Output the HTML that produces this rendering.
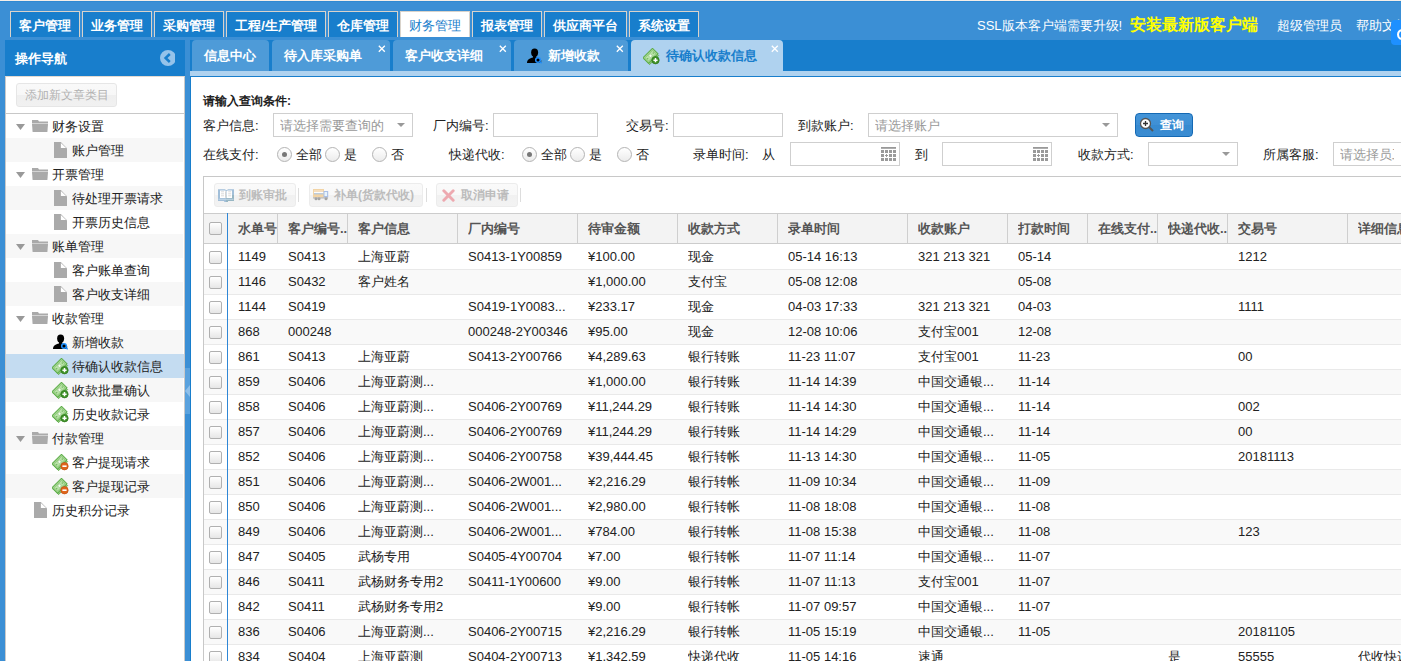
<!DOCTYPE html><html><head><meta charset="utf-8"><style>
*{box-sizing:border-box;margin:0;padding:0}
html,body{width:1401px;height:661px;overflow:hidden}
body{position:relative;background:#3b8fd5;font-family:"Liberation Sans",sans-serif;font-size:13px;color:#222}
.a{position:absolute}
.topline{left:0;top:0;width:1401px;height:1px;background:#f4eee8;box-shadow:0 1px 0 #2f89d2}
.mt{position:absolute;top:11px;height:26px;background:#187ecc;border:1px solid #d9d3cb;border-bottom:none;color:#fff;font-weight:bold;font-size:13px;line-height:24px;padding-top:2px;text-align:center;white-space:nowrap}
.mt.on{background:#fff;color:#187ecc;font-weight:normal}
.hdr{color:#fff;font-size:13px;line-height:20px;top:16px;white-space:nowrap}
.lpanel-h{left:5px;top:40px;width:180px;height:36px;background:#187ecc;color:#fff;font-weight:bold;font-size:13px;line-height:36px;padding-left:10px;padding-top:1px}
.lpanel-b{left:5px;top:76px;width:180px;height:600px;background:#fff;border:1px solid #c9c9c9;border-top:1px solid #e2dad2}
.addbtn{left:16px;top:83px;width:101px;height:24px;border:1px solid #e6e6e6;border-radius:3px;background:linear-gradient(#f9f9f9 0%,#f7f7f7 50%,#efefef 52%,#f1f1f1 100%);color:#b2b2b2;font-size:12px;line-height:22px;text-align:center}
.sep{left:6px;top:113px;width:178px;height:1px;background:#c8c8c8}
.tr{position:absolute;left:6px;width:177px;height:24px;line-height:24px;font-size:13px;color:#222}
.tr.g{background:#f7f7f7}
.tr.sel{background:#c4dcf1;width:178px}
.tr span.t{position:absolute;top:1px}
.mainbar{left:190px;top:40px;width:1211px;height:36px;background:#187ecc}
.strip{left:190px;top:71px;width:1211px;height:5px;background:#afd2ef}
.content{left:190px;top:76px;width:1211px;height:585px;background:#fff;border-left:1px solid #187ecc;border-top:1px solid #187ecc}
.it{position:absolute;top:40px;height:31px;background:#4e9bd8;border-radius:4px 4px 0 0;color:#fff;font-weight:bold;font-size:13px;line-height:30px}
.it.on{background:#afd2ef;color:#187ecc}
.it .x{position:absolute;font-weight:normal;font-size:12px;line-height:12px;color:#fff}
.lbl{position:absolute;font-size:13px;line-height:16px;color:#222;margin-top:1px;white-space:nowrap}
.inp{position:absolute;border:1px solid #cfcfcf;background:#fff;height:24px}
.ph{position:absolute;color:#999;font-size:13px;line-height:16px;white-space:nowrap;overflow:hidden;margin-top:1px}
.tri{position:absolute;width:0;height:0;border-left:4px solid transparent;border-right:4px solid transparent;border-top:4px solid #999}
.radio{position:absolute;width:15px;height:15px;border-radius:50%;border:1px solid #b4b4b4;background:linear-gradient(#fff,#ececec)}
.radio.on::after{content:"";position:absolute;left:4px;top:4px;width:5px;height:5px;border-radius:50%;background:#777}
.grid{left:203px;top:176px;width:1300px;height:600px;border:1px solid #c8c8c8}
.tb{position:absolute;top:183px;height:24px;border:1px solid #ececec;border-radius:3px;background:linear-gradient(#fafafa 0%,#f8f8f8 50%,#f1f1f1 52%,#f3f3f3 100%);color:#bcbcbc;font-weight:bold;font-size:12px;line-height:22px}
.tbsep{position:absolute;top:188px;width:1px;height:14px;background:#ddd}
.gh{left:204px;top:213px;width:1300px;height:31px;background:#f3f3f3;border-top:1px solid #cccccc;border-bottom:1px solid #cccccc}
.hc{position:absolute;top:214px;height:29px;line-height:29px;font-weight:bold;color:#555;font-size:13px;white-space:nowrap;overflow:hidden}
.vs{position:absolute;top:214px;width:1px;height:29px;background:#cfcfcf}
.row{position:absolute;left:204px;width:1300px;height:25px;border-bottom:1px solid #e9e9e9}
.row.g{background:#f9f9f9}
.c{position:absolute;top:0;line-height:24px;white-space:nowrap;overflow:hidden;color:#222}
.cb{position:absolute;width:13px;height:13px;border:1px solid #b0b0b0;border-radius:2px;background:linear-gradient(#fff,#e6e6e6)}
.frz{left:227px;top:213px;width:1px;height:450px;background:#2f87d6}
</style></head><body>
<div class="a topline"></div>
<div class="mt" style="left:10px;width:70px">客户管理</div>
<div class="mt" style="left:82px;width:70px">业务管理</div>
<div class="mt" style="left:154px;width:70px">采购管理</div>
<div class="mt" style="left:226px;width:100px">工程/生产管理</div>
<div class="mt" style="left:328px;width:70px">仓库管理</div>
<div class="mt on" style="left:400px;width:70px">财务管理</div>
<div class="mt" style="left:472px;width:70px">报表管理</div>
<div class="mt" style="left:544px;width:83px">供应商平台</div>
<div class="mt" style="left:629px;width:70px">系统设置</div>
<div class="a hdr" style="left:977px">SSL版本客户端需要升级!</div>
<div class="a hdr" style="left:1130px;top:13px;font-size:16px;line-height:24px;font-weight:bold;color:#ffff00">安装最新版客户端</div>
<div class="a hdr" style="left:1277px">超级管理员</div>
<div class="a hdr" style="left:1356px">帮助文档</div>
<div class="a" style="left:1391px;top:20px;width:20px;height:25px;background:#1e90ff;border-radius:4px;z-index:5"><div class="a" style="left:6px;top:9px;width:11px;height:11px;border:2.5px solid #fff;border-radius:50%"></div></div>
<div class="a lpanel-h">操作导航</div>
<div class="a" style="left:160px;top:50px;width:15px;height:16px;overflow:hidden"><div class="a" style="left:0;top:0;width:16px;height:16px;border-radius:50%;background:#95c3ea"></div></div>
<svg class="a" style="left:160px;top:50px" width="16" height="16"><path d="M9.8 4 L5.6 8 L9.8 12" stroke="#187ecc" stroke-width="2.5" fill="none"/></svg>
<div class="a lpanel-b"></div>
<div class="a addbtn">添加新文章类目</div>
<div class="a sep"></div>
<div class="tr" style="top:114px"><svg class="a" style="left:10px;top:10px" width="9" height="6"><path d="M0 0h9L4.5 6z" fill="#999"/></svg><svg class="a" style="left:26px;top:6px" width="16" height="12"><path d="M0 0h6l1 1.5h9v2H0z" fill="#aaa"/><path d="M0 4h16l-0.6 8H0.6z" fill="#aaa"/></svg><span class="t" style="left:46px">财务设置</span></div>
<div class="tr g" style="top:138px"><svg class="a" style="left:48px;top:4px" width="13" height="16"><path d="M0 0h6.8L13 6.2V16H0z" fill="#aaa"/><path d="M6.9 0.9V6.1h5.2z" fill="#fff"/></svg><span class="t" style="left:66px">账户管理</span></div>
<div class="tr" style="top:162px"><svg class="a" style="left:10px;top:10px" width="9" height="6"><path d="M0 0h9L4.5 6z" fill="#999"/></svg><svg class="a" style="left:26px;top:6px" width="16" height="12"><path d="M0 0h6l1 1.5h9v2H0z" fill="#aaa"/><path d="M0 4h16l-0.6 8H0.6z" fill="#aaa"/></svg><span class="t" style="left:46px">开票管理</span></div>
<div class="tr g" style="top:186px"><svg class="a" style="left:48px;top:4px" width="13" height="16"><path d="M0 0h6.8L13 6.2V16H0z" fill="#aaa"/><path d="M6.9 0.9V6.1h5.2z" fill="#fff"/></svg><span class="t" style="left:66px">待处理开票请求</span></div>
<div class="tr" style="top:210px"><svg class="a" style="left:48px;top:4px" width="13" height="16"><path d="M0 0h6.8L13 6.2V16H0z" fill="#aaa"/><path d="M6.9 0.9V6.1h5.2z" fill="#fff"/></svg><span class="t" style="left:66px">开票历史信息</span></div>
<div class="tr g" style="top:234px"><svg class="a" style="left:10px;top:10px" width="9" height="6"><path d="M0 0h9L4.5 6z" fill="#999"/></svg><svg class="a" style="left:26px;top:6px" width="16" height="12"><path d="M0 0h6l1 1.5h9v2H0z" fill="#aaa"/><path d="M0 4h16l-0.6 8H0.6z" fill="#aaa"/></svg><span class="t" style="left:46px">账单管理</span></div>
<div class="tr" style="top:258px"><svg class="a" style="left:48px;top:4px" width="13" height="16"><path d="M0 0h6.8L13 6.2V16H0z" fill="#aaa"/><path d="M6.9 0.9V6.1h5.2z" fill="#fff"/></svg><span class="t" style="left:66px">客户账单查询</span></div>
<div class="tr g" style="top:282px"><svg class="a" style="left:48px;top:4px" width="13" height="16"><path d="M0 0h6.8L13 6.2V16H0z" fill="#aaa"/><path d="M6.9 0.9V6.1h5.2z" fill="#fff"/></svg><span class="t" style="left:66px">客户收支详细</span></div>
<div class="tr" style="top:306px"><svg class="a" style="left:10px;top:10px" width="9" height="6"><path d="M0 0h9L4.5 6z" fill="#999"/></svg><svg class="a" style="left:26px;top:6px" width="16" height="12"><path d="M0 0h6l1 1.5h9v2H0z" fill="#aaa"/><path d="M0 4h16l-0.6 8H0.6z" fill="#aaa"/></svg><span class="t" style="left:46px">收款管理</span></div>
<div class="tr g" style="top:330px"><svg class="a" style="left:47px;top:4px" width="16" height="16" viewBox="0 0 16 16"><ellipse cx="7.6" cy="4.6" rx="3.5" ry="4.2" fill="#000"/><rect x="6" y="7" width="3.2" height="3.5" fill="#000"/><path d="M0 15C0 11.8 2.5 10.2 6 9.6h3.2c2.5.4 4.2 1.2 5 2.6V15z" fill="#000"/><circle cx="11" cy="12" r="2.3" fill="#000" stroke="#1e90ff" stroke-width="1.5"/><path d="M12.7 13.7l2 1.5" stroke="#1e90ff" stroke-width="1.3"/></svg><span class="t" style="left:66px">新增收款</span></div>
<div class="tr sel" style="top:354px"><svg class="a" style="left:46px;top:4px" width="17" height="17" viewBox="0 0 17 17"><g transform="rotate(-45 7.5 7.8)"><rect x="0.6" y="5.8" width="12.8" height="7.6" fill="#8cc878" stroke="#64ac50" stroke-width=".8"/><rect x="0.8" y="3.9" width="13.4" height="7.8" fill="#a8d895" stroke="#5fae4a" stroke-width="1"/><rect x="2.4" y="5.4" width="10.2" height="4.8" fill="#b9e2a8" stroke="#86c472" stroke-width=".7"/><circle cx="7.5" cy="7.8" r="1.6" fill="#f4fbf0" stroke="#7dbb68" stroke-width=".5"/><circle cx="3.6" cy="7.8" r=".6" fill="#5fae4a"/><circle cx="11.4" cy="7.8" r=".6" fill="#5fae4a"/></g><circle cx="12.5" cy="12.2" r="3.7" fill="#3d8f26"/><circle cx="12.5" cy="12.2" r="3.7" fill="none" stroke="#2f7a1c" stroke-width=".7"/><path d="M12.5 10.1v4.2M10.4 12.2h4.2" stroke="#fff" stroke-width="1.5"/></svg><span class="t" style="left:66px">待确认收款信息</span></div>
<div class="tr g" style="top:378px"><svg class="a" style="left:46px;top:4px" width="17" height="17" viewBox="0 0 17 17"><g transform="rotate(-45 7.5 7.8)"><rect x="0.6" y="5.8" width="12.8" height="7.6" fill="#8cc878" stroke="#64ac50" stroke-width=".8"/><rect x="0.8" y="3.9" width="13.4" height="7.8" fill="#a8d895" stroke="#5fae4a" stroke-width="1"/><rect x="2.4" y="5.4" width="10.2" height="4.8" fill="#b9e2a8" stroke="#86c472" stroke-width=".7"/><circle cx="7.5" cy="7.8" r="1.6" fill="#f4fbf0" stroke="#7dbb68" stroke-width=".5"/><circle cx="3.6" cy="7.8" r=".6" fill="#5fae4a"/><circle cx="11.4" cy="7.8" r=".6" fill="#5fae4a"/></g><circle cx="12.5" cy="12.2" r="3.7" fill="#3d8f26"/><circle cx="12.5" cy="12.2" r="3.7" fill="none" stroke="#2f7a1c" stroke-width=".7"/><path d="M12.5 10.1v4.2M10.4 12.2h4.2" stroke="#fff" stroke-width="1.5"/></svg><span class="t" style="left:66px">收款批量确认</span></div>
<div class="tr" style="top:402px"><svg class="a" style="left:46px;top:4px" width="17" height="17" viewBox="0 0 17 17"><g transform="rotate(-45 7.5 7.8)"><rect x="0.6" y="5.8" width="12.8" height="7.6" fill="#8cc878" stroke="#64ac50" stroke-width=".8"/><rect x="0.8" y="3.9" width="13.4" height="7.8" fill="#a8d895" stroke="#5fae4a" stroke-width="1"/><rect x="2.4" y="5.4" width="10.2" height="4.8" fill="#b9e2a8" stroke="#86c472" stroke-width=".7"/><circle cx="7.5" cy="7.8" r="1.6" fill="#f4fbf0" stroke="#7dbb68" stroke-width=".5"/><circle cx="3.6" cy="7.8" r=".6" fill="#5fae4a"/><circle cx="11.4" cy="7.8" r=".6" fill="#5fae4a"/></g><circle cx="12.5" cy="12.2" r="3.7" fill="#3d8f26"/><circle cx="12.5" cy="12.2" r="3.7" fill="none" stroke="#2f7a1c" stroke-width=".7"/><path d="M12.5 10.1v4.2M10.4 12.2h4.2" stroke="#fff" stroke-width="1.5"/></svg><span class="t" style="left:66px">历史收款记录</span></div>
<div class="tr g" style="top:426px"><svg class="a" style="left:10px;top:10px" width="9" height="6"><path d="M0 0h9L4.5 6z" fill="#999"/></svg><svg class="a" style="left:26px;top:6px" width="16" height="12"><path d="M0 0h6l1 1.5h9v2H0z" fill="#aaa"/><path d="M0 4h16l-0.6 8H0.6z" fill="#aaa"/></svg><span class="t" style="left:46px">付款管理</span></div>
<div class="tr" style="top:450px"><svg class="a" style="left:46px;top:4px" width="17" height="17" viewBox="0 0 17 17"><g transform="rotate(-45 7.5 7.8)"><rect x="0.6" y="5.8" width="12.8" height="7.6" fill="#8cc878" stroke="#64ac50" stroke-width=".8"/><rect x="0.8" y="3.9" width="13.4" height="7.8" fill="#a8d895" stroke="#5fae4a" stroke-width="1"/><rect x="2.4" y="5.4" width="10.2" height="4.8" fill="#b9e2a8" stroke="#86c472" stroke-width=".7"/><circle cx="7.5" cy="7.8" r="1.6" fill="#f4fbf0" stroke="#7dbb68" stroke-width=".5"/><circle cx="3.6" cy="7.8" r=".6" fill="#5fae4a"/><circle cx="11.4" cy="7.8" r=".6" fill="#5fae4a"/></g><circle cx="12.5" cy="12.2" r="3.7" fill="#e0661c"/><circle cx="12.5" cy="12.2" r="3.7" fill="none" stroke="#c24f10" stroke-width=".7"/><rect x="10.4" y="11.4" width="4.2" height="1.6" fill="#fff"/></svg><span class="t" style="left:66px">客户提现请求</span></div>
<div class="tr g" style="top:474px"><svg class="a" style="left:46px;top:4px" width="17" height="17" viewBox="0 0 17 17"><g transform="rotate(-45 7.5 7.8)"><rect x="0.6" y="5.8" width="12.8" height="7.6" fill="#8cc878" stroke="#64ac50" stroke-width=".8"/><rect x="0.8" y="3.9" width="13.4" height="7.8" fill="#a8d895" stroke="#5fae4a" stroke-width="1"/><rect x="2.4" y="5.4" width="10.2" height="4.8" fill="#b9e2a8" stroke="#86c472" stroke-width=".7"/><circle cx="7.5" cy="7.8" r="1.6" fill="#f4fbf0" stroke="#7dbb68" stroke-width=".5"/><circle cx="3.6" cy="7.8" r=".6" fill="#5fae4a"/><circle cx="11.4" cy="7.8" r=".6" fill="#5fae4a"/></g><circle cx="12.5" cy="12.2" r="3.7" fill="#e0661c"/><circle cx="12.5" cy="12.2" r="3.7" fill="none" stroke="#c24f10" stroke-width=".7"/><rect x="10.4" y="11.4" width="4.2" height="1.6" fill="#fff"/></svg><span class="t" style="left:66px">客户提现记录</span></div>
<div class="tr" style="top:498px"><svg class="a" style="left:28px;top:4px" width="13" height="16"><path d="M0 0h6.8L13 6.2V16H0z" fill="#aaa"/><path d="M6.9 0.9V6.1h5.2z" fill="#fff"/></svg><span class="t" style="left:46px">历史积分记录</span></div>
<div class="a" style="left:185px;top:368px;width:5px;height:46px;background:#5aa2de"></div>
<svg class="a" style="left:185px;top:385px" width="5" height="12"><path d="M5 0v12L0 6z" fill="#8fc0ea"/></svg>
<div class="a mainbar"></div>
<div class="a strip"></div>
<div class="a content"></div>
<div class="it" style="left:192px;width:77px;height:31px"><span class="a" style="left:12px;top:1px">信息中心</span></div>
<div class="it" style="left:272px;width:118px;height:31px"><span class="a" style="left:12px;top:1px">待入库采购单</span><svg class="a" style="left:106px;top:5px" width="8" height="8"><path d="M0.8 0.8l6 6M6.8 0.8l-6 6" stroke="#fff" stroke-width="1.3"/></svg></div>
<div class="it" style="left:393px;width:118px;height:31px"><span class="a" style="left:12px;top:1px">客户收支详细</span><svg class="a" style="left:106px;top:5px" width="8" height="8"><path d="M0.8 0.8l6 6M6.8 0.8l-6 6" stroke="#fff" stroke-width="1.3"/></svg></div>
<div class="it" style="left:514px;width:114px;height:31px"><svg class="a" style="left:13px;top:8px" width="16" height="16" viewBox="0 0 16 16"><ellipse cx="7.6" cy="4.6" rx="3.5" ry="4.2" fill="#000"/><rect x="6" y="7" width="3.2" height="3.5" fill="#000"/><path d="M0 15C0 11.8 2.5 10.2 6 9.6h3.2c2.5.4 4.2 1.2 5 2.6V15z" fill="#000"/><circle cx="11" cy="12" r="2.3" fill="#000" stroke="#1e90ff" stroke-width="1.5"/><path d="M12.7 13.7l2 1.5" stroke="#1e90ff" stroke-width="1.3"/></svg><span class="a" style="left:34px;top:1px">新增收款</span><svg class="a" style="left:102px;top:5px" width="8" height="8"><path d="M0.8 0.8l6 6M6.8 0.8l-6 6" stroke="#fff" stroke-width="1.3"/></svg></div>
<div class="it on" style="left:631px;width:152px;height:36px"><svg class="a" style="left:12px;top:8px" width="17" height="17" viewBox="0 0 17 17"><g transform="rotate(-45 7.5 7.8)"><rect x="0.6" y="5.8" width="12.8" height="7.6" fill="#8cc878" stroke="#64ac50" stroke-width=".8"/><rect x="0.8" y="3.9" width="13.4" height="7.8" fill="#a8d895" stroke="#5fae4a" stroke-width="1"/><rect x="2.4" y="5.4" width="10.2" height="4.8" fill="#b9e2a8" stroke="#86c472" stroke-width=".7"/><circle cx="7.5" cy="7.8" r="1.6" fill="#f4fbf0" stroke="#7dbb68" stroke-width=".5"/><circle cx="3.6" cy="7.8" r=".6" fill="#5fae4a"/><circle cx="11.4" cy="7.8" r=".6" fill="#5fae4a"/></g><circle cx="12.5" cy="12.2" r="3.7" fill="#3d8f26"/><circle cx="12.5" cy="12.2" r="3.7" fill="none" stroke="#2f7a1c" stroke-width=".7"/><path d="M12.5 10.1v4.2M10.4 12.2h4.2" stroke="#fff" stroke-width="1.5"/></svg><span class="a" style="left:35px;top:1px">待确认收款信息</span><svg class="a" style="left:140px;top:5px" width="8" height="8"><path d="M0.8 0.8l6 6M6.8 0.8l-6 6" stroke="#fff" stroke-width="1.3"/></svg></div>
<div class="lbl" style="left:203px;top:92px;font-weight:bold;font-size:12px">请输入查询条件:</div>
<div class="lbl" style="left:203px;top:117px">客户信息:</div>
<div class="inp" style="left:273px;top:113px;width:140px"></div>
<div class="ph" style="left:280px;top:117px">请选择需要查询的</div>
<div class="tri" style="left:397px;top:123px"></div>
<div class="lbl" style="left:433px;top:117px">厂内编号:</div>
<div class="inp" style="left:493px;top:113px;width:105px"></div>
<div class="lbl" style="left:626px;top:117px">交易号:</div>
<div class="inp" style="left:673px;top:113px;width:110px"></div>
<div class="lbl" style="left:798px;top:117px">到款账户:</div>
<div class="inp" style="left:868px;top:113px;width:250px"></div>
<div class="ph" style="left:875px;top:117px">请选择账户</div>
<div class="tri" style="left:1102px;top:123px"></div>
<div class="a" style="left:1135px;top:113px;width:58px;height:24px;border-radius:4px;background:linear-gradient(#4495d8 0%,#3e8fd5 50%,#378ad0 52%,#3a8cd2 100%);border:1px solid #1469b4"></div>
<svg class="a" style="left:1139px;top:117px" width="16" height="16"><circle cx="6.5" cy="6.5" r="5" fill="#fff" stroke="#555" stroke-width="1.3"/><path d="M4 6.5h5M6.5 4v5" stroke="#333" stroke-width="1.3"/><path d="M10 10l4 4" stroke="#555" stroke-width="2"/></svg>
<div class="lbl" style="left:1160px;top:116px;color:#fff;font-weight:bold;font-size:12px">查询</div>
<div class="lbl" style="left:203px;top:146px">在线支付:</div>
<div class="radio on" style="left:277px;top:147px"></div>
<div class="radio" style="left:325px;top:147px"></div>
<div class="radio" style="left:372px;top:147px"></div>
<div class="lbl" style="left:296px;top:146px">全部</div>
<div class="lbl" style="left:344px;top:146px">是</div>
<div class="lbl" style="left:391px;top:146px">否</div>
<div class="lbl" style="left:449px;top:146px">快递代收:</div>
<div class="radio on" style="left:522px;top:147px"></div>
<div class="radio" style="left:570px;top:147px"></div>
<div class="radio" style="left:617px;top:147px"></div>
<div class="lbl" style="left:541px;top:146px">全部</div>
<div class="lbl" style="left:589px;top:146px">是</div>
<div class="lbl" style="left:636px;top:146px">否</div>
<div class="lbl" style="left:693px;top:146px">录单时间:</div>
<div class="lbl" style="left:762px;top:146px">从</div>
<div class="inp" style="left:790px;top:142px;width:110px"></div>
<svg class="a" style="left:881px;top:147px" width="15" height="14"><rect x="0" y="0" width="15" height="1.8" fill="#999"/><rect x="0" y="3" width="3" height="3" fill="#9a9a9a"/><rect x="4" y="3" width="3" height="3" fill="#9a9a9a"/><rect x="8" y="3" width="3" height="3" fill="#9a9a9a"/><rect x="12" y="3" width="3" height="3" fill="#9a9a9a"/><rect x="0" y="7" width="3" height="3" fill="#9a9a9a"/><rect x="8" y="7" width="3" height="3" fill="#9a9a9a"/><rect x="12" y="7" width="3" height="3" fill="#9a9a9a"/><rect x="0" y="11" width="3" height="3" fill="#9a9a9a"/><rect x="4" y="11" width="3" height="3" fill="#9a9a9a"/><rect x="8" y="11" width="3" height="3" fill="#9a9a9a"/><rect x="12" y="11" width="3" height="3" fill="#9a9a9a"/><rect x="5" y="7" width="1" height="3" fill="#9a9a9a"/><rect x="4" y="8" width="3" height="1" fill="#9a9a9a"/></svg>
<div class="lbl" style="left:915px;top:146px">到</div>
<div class="inp" style="left:942px;top:142px;width:110px"></div>
<svg class="a" style="left:1033px;top:147px" width="15" height="14"><rect x="0" y="0" width="15" height="1.8" fill="#999"/><rect x="0" y="3" width="3" height="3" fill="#9a9a9a"/><rect x="4" y="3" width="3" height="3" fill="#9a9a9a"/><rect x="8" y="3" width="3" height="3" fill="#9a9a9a"/><rect x="12" y="3" width="3" height="3" fill="#9a9a9a"/><rect x="0" y="7" width="3" height="3" fill="#9a9a9a"/><rect x="8" y="7" width="3" height="3" fill="#9a9a9a"/><rect x="12" y="7" width="3" height="3" fill="#9a9a9a"/><rect x="0" y="11" width="3" height="3" fill="#9a9a9a"/><rect x="4" y="11" width="3" height="3" fill="#9a9a9a"/><rect x="8" y="11" width="3" height="3" fill="#9a9a9a"/><rect x="12" y="11" width="3" height="3" fill="#9a9a9a"/><rect x="5" y="7" width="1" height="3" fill="#9a9a9a"/><rect x="4" y="8" width="3" height="1" fill="#9a9a9a"/></svg>
<div class="lbl" style="left:1078px;top:146px">收款方式:</div>
<div class="inp" style="left:1148px;top:142px;width:90px"></div>
<div class="tri" style="left:1222px;top:152px"></div>
<div class="lbl" style="left:1263px;top:146px">所属客服:</div>
<div class="inp" style="left:1333px;top:142px;width:100px"></div>
<div class="ph" style="left:1340px;top:146px;width:54px">请选择员工</div>
<div class="a grid"></div>
<div class="tb" style="left:214px;width:82px"></div>
<svg class="a" style="left:218px;top:189px" width="17" height="14" viewBox="0 0 17 14"><path d="M0 0.3h6.8l1.7 1 1.7-1H16v11.7h-6v1.1H6.2V12H0z" fill="#a2bfd9"/><path d="M16 6v6h-6v1.1H8V6z" fill="#8fb0b4" opacity=".6"/><path d="M2 1.4h5l1.1.7V9H2zM8.6 2.1l1.1-.7H14V9H8.6z" fill="#fff"/><path d="M3 2.8h3M3 4.8h3M3 6.8h3M10.2 2.8h3M10.2 4.8h3M10.2 6.8h3" stroke="#d6d6d6" stroke-width=".9"/><path d="M7.6 2.3v6.5" stroke="#d0d0d0" stroke-width="1"/><path d="M0.5 10.3h15" stroke="#c8dcec" stroke-width=".8"/></svg>
<div class="a" style="left:239px;top:186px;color:#bcbcbc;font-weight:bold;font-size:12px;line-height:18px">到账审批</div>
<div class="tbsep" style="left:298px"></div>
<div class="tb" style="left:309px;width:114px"></div>
<svg class="a" style="left:313px;top:189px" width="16" height="12" viewBox="0 0 16 12"><rect x="0" y="0" width="11" height="8.5" fill="#f2d4a6"/><rect x="1" y="1.5" width="9" height="1" fill="#f8e8d8"/><rect x="1" y="3" width="9.5" height="1.3" fill="#fdfdfd"/><rect x="1" y="4.3" width="9.5" height="1" fill="#a6c4e6"/><rect x="10.5" y="2" width="4.7" height="6.5" fill="#a9bfe6"/><rect x="11.5" y="3" width="2.6" height="4" fill="#e8f4fc"/><rect x="0" y="8.3" width="15" height="1.2" fill="#b8b8b8"/><circle cx="3" cy="9.8" r="1.5" fill="#a5a5a5"/><circle cx="6" cy="9.8" r="1.5" fill="#a5a5a5"/><circle cx="13" cy="9.8" r="1.5" fill="#a5a5a5"/></svg>
<div class="a" style="left:334px;top:186px;color:#bcbcbc;font-weight:bold;font-size:12px;line-height:18px">补单(货款代收)</div>
<div class="tbsep" style="left:426px"></div>
<div class="tb" style="left:436px;width:82px"></div>
<svg class="a" style="left:442px;top:189px" width="13" height="13" viewBox="0 0 13 13"><path d="M1.8 1.8l9.4 9.4M11.2 1.8l-9.4 9.4" stroke="#eda9b0" stroke-width="2.9" stroke-linecap="round"/></svg>
<div class="a" style="left:461px;top:186px;color:#bcbcbc;font-weight:bold;font-size:12px;line-height:18px">取消申请</div>
<div class="tbsep" style="left:520px"></div>
<div class="a gh"></div>
<div class="cb" style="left:209px;top:222px"></div>
<div class="hc" style="left:238px;width:39px">水单号</div>
<div class="hc" style="left:288px;width:59px">客户编号..</div>
<div class="vs" style="left:277px"></div>
<div class="hc" style="left:358px;width:99px">客户信息</div>
<div class="vs" style="left:347px"></div>
<div class="hc" style="left:468px;width:109px">厂内编号</div>
<div class="vs" style="left:457px"></div>
<div class="hc" style="left:588px;width:89px">待审金额</div>
<div class="vs" style="left:577px"></div>
<div class="hc" style="left:688px;width:89px">收款方式</div>
<div class="vs" style="left:677px"></div>
<div class="hc" style="left:788px;width:119px">录单时间</div>
<div class="vs" style="left:777px"></div>
<div class="hc" style="left:918px;width:89px">收款账户</div>
<div class="vs" style="left:907px"></div>
<div class="hc" style="left:1018px;width:69px">打款时间</div>
<div class="vs" style="left:1007px"></div>
<div class="hc" style="left:1098px;width:59px">在线支付..</div>
<div class="vs" style="left:1087px"></div>
<div class="hc" style="left:1168px;width:59px">快递代收..</div>
<div class="vs" style="left:1157px"></div>
<div class="hc" style="left:1238px;width:109px">交易号</div>
<div class="vs" style="left:1227px"></div>
<div class="hc" style="left:1358px;width:141px">详细信息</div>
<div class="vs" style="left:1347px"></div>
<div class="row" style="top:245px;height:25px">
<div class="cb" style="left:5px;top:6px"></div>
<div class="c" style="left:34px;top:0px;width:39px">1149</div>
<div class="c" style="left:84px;top:0px;width:59px">S0413</div>
<div class="c" style="left:154px;top:0px;width:99px">上海亚蔚</div>
<div class="c" style="left:264px;top:0px;width:109px">S0413-1Y00859</div>
<div class="c" style="left:384px;top:0px;width:89px">¥100.00</div>
<div class="c" style="left:484px;top:0px;width:89px">现金</div>
<div class="c" style="left:584px;top:0px;width:119px">05-14 16:13</div>
<div class="c" style="left:714px;top:0px;width:89px">321 213 321</div>
<div class="c" style="left:814px;top:0px;width:69px">05-14</div>
<div class="c" style="left:1034px;top:0px;width:109px">1212</div>
</div>
<div class="row g" style="top:270px;height:25px">
<div class="cb" style="left:5px;top:6px"></div>
<div class="c" style="left:34px;top:0px;width:39px">1146</div>
<div class="c" style="left:84px;top:0px;width:59px">S0432</div>
<div class="c" style="left:154px;top:0px;width:99px">客户姓名</div>
<div class="c" style="left:384px;top:0px;width:89px">¥1,000.00</div>
<div class="c" style="left:484px;top:0px;width:89px">支付宝</div>
<div class="c" style="left:584px;top:0px;width:119px">05-08 12:08</div>
<div class="c" style="left:814px;top:0px;width:69px">05-08</div>
</div>
<div class="row" style="top:295px;height:25px">
<div class="cb" style="left:5px;top:6px"></div>
<div class="c" style="left:34px;top:0px;width:39px">1144</div>
<div class="c" style="left:84px;top:0px;width:59px">S0419</div>
<div class="c" style="left:264px;top:0px;width:109px">S0419-1Y0083...</div>
<div class="c" style="left:384px;top:0px;width:89px">¥233.17</div>
<div class="c" style="left:484px;top:0px;width:89px">现金</div>
<div class="c" style="left:584px;top:0px;width:119px">04-03 17:33</div>
<div class="c" style="left:714px;top:0px;width:89px">321 213 321</div>
<div class="c" style="left:814px;top:0px;width:69px">04-03</div>
<div class="c" style="left:1034px;top:0px;width:109px">1111</div>
</div>
<div class="row g" style="top:320px;height:25px">
<div class="cb" style="left:5px;top:6px"></div>
<div class="c" style="left:34px;top:0px;width:39px">868</div>
<div class="c" style="left:84px;top:0px;width:59px">000248</div>
<div class="c" style="left:264px;top:0px;width:109px">000248-2Y00346</div>
<div class="c" style="left:384px;top:0px;width:89px">¥95.00</div>
<div class="c" style="left:484px;top:0px;width:89px">现金</div>
<div class="c" style="left:584px;top:0px;width:119px">12-08 10:06</div>
<div class="c" style="left:714px;top:0px;width:89px">支付宝001</div>
<div class="c" style="left:814px;top:0px;width:69px">12-08</div>
</div>
<div class="row" style="top:345px;height:25px">
<div class="cb" style="left:5px;top:6px"></div>
<div class="c" style="left:34px;top:0px;width:39px">861</div>
<div class="c" style="left:84px;top:0px;width:59px">S0413</div>
<div class="c" style="left:154px;top:0px;width:99px">上海亚蔚</div>
<div class="c" style="left:264px;top:0px;width:109px">S0413-2Y00766</div>
<div class="c" style="left:384px;top:0px;width:89px">¥4,289.63</div>
<div class="c" style="left:484px;top:0px;width:89px">银行转账</div>
<div class="c" style="left:584px;top:0px;width:119px">11-23 11:07</div>
<div class="c" style="left:714px;top:0px;width:89px">支付宝001</div>
<div class="c" style="left:814px;top:0px;width:69px">11-23</div>
<div class="c" style="left:1034px;top:0px;width:109px">00</div>
</div>
<div class="row g" style="top:370px;height:25px">
<div class="cb" style="left:5px;top:6px"></div>
<div class="c" style="left:34px;top:0px;width:39px">859</div>
<div class="c" style="left:84px;top:0px;width:59px">S0406</div>
<div class="c" style="left:154px;top:0px;width:99px">上海亚蔚测...</div>
<div class="c" style="left:384px;top:0px;width:89px">¥1,000.00</div>
<div class="c" style="left:484px;top:0px;width:89px">银行转账</div>
<div class="c" style="left:584px;top:0px;width:119px">11-14 14:39</div>
<div class="c" style="left:714px;top:0px;width:89px">中国交通银...</div>
<div class="c" style="left:814px;top:0px;width:69px">11-14</div>
</div>
<div class="row" style="top:395px;height:25px">
<div class="cb" style="left:5px;top:6px"></div>
<div class="c" style="left:34px;top:0px;width:39px">858</div>
<div class="c" style="left:84px;top:0px;width:59px">S0406</div>
<div class="c" style="left:154px;top:0px;width:99px">上海亚蔚测...</div>
<div class="c" style="left:264px;top:0px;width:109px">S0406-2Y00769</div>
<div class="c" style="left:384px;top:0px;width:89px">¥11,244.29</div>
<div class="c" style="left:484px;top:0px;width:89px">银行转账</div>
<div class="c" style="left:584px;top:0px;width:119px">11-14 14:30</div>
<div class="c" style="left:714px;top:0px;width:89px">中国交通银...</div>
<div class="c" style="left:814px;top:0px;width:69px">11-14</div>
<div class="c" style="left:1034px;top:0px;width:109px">002</div>
</div>
<div class="row g" style="top:420px;height:25px">
<div class="cb" style="left:5px;top:6px"></div>
<div class="c" style="left:34px;top:0px;width:39px">857</div>
<div class="c" style="left:84px;top:0px;width:59px">S0406</div>
<div class="c" style="left:154px;top:0px;width:99px">上海亚蔚测...</div>
<div class="c" style="left:264px;top:0px;width:109px">S0406-2Y00769</div>
<div class="c" style="left:384px;top:0px;width:89px">¥11,244.29</div>
<div class="c" style="left:484px;top:0px;width:89px">银行转账</div>
<div class="c" style="left:584px;top:0px;width:119px">11-14 14:29</div>
<div class="c" style="left:714px;top:0px;width:89px">中国交通银...</div>
<div class="c" style="left:814px;top:0px;width:69px">11-14</div>
<div class="c" style="left:1034px;top:0px;width:109px">00</div>
</div>
<div class="row" style="top:445px;height:25px">
<div class="cb" style="left:5px;top:6px"></div>
<div class="c" style="left:34px;top:0px;width:39px">852</div>
<div class="c" style="left:84px;top:0px;width:59px">S0406</div>
<div class="c" style="left:154px;top:0px;width:99px">上海亚蔚测...</div>
<div class="c" style="left:264px;top:0px;width:109px">S0406-2Y00758</div>
<div class="c" style="left:384px;top:0px;width:89px">¥39,444.45</div>
<div class="c" style="left:484px;top:0px;width:89px">银行转帐</div>
<div class="c" style="left:584px;top:0px;width:119px">11-13 14:30</div>
<div class="c" style="left:714px;top:0px;width:89px">中国交通银...</div>
<div class="c" style="left:814px;top:0px;width:69px">11-05</div>
<div class="c" style="left:1034px;top:0px;width:109px">20181113</div>
</div>
<div class="row g" style="top:470px;height:25px">
<div class="cb" style="left:5px;top:6px"></div>
<div class="c" style="left:34px;top:0px;width:39px">851</div>
<div class="c" style="left:84px;top:0px;width:59px">S0406</div>
<div class="c" style="left:154px;top:0px;width:99px">上海亚蔚测...</div>
<div class="c" style="left:264px;top:0px;width:109px">S0406-2W001...</div>
<div class="c" style="left:384px;top:0px;width:89px">¥2,216.29</div>
<div class="c" style="left:484px;top:0px;width:89px">银行转帐</div>
<div class="c" style="left:584px;top:0px;width:119px">11-09 10:34</div>
<div class="c" style="left:714px;top:0px;width:89px">中国交通银...</div>
<div class="c" style="left:814px;top:0px;width:69px">11-09</div>
</div>
<div class="row" style="top:495px;height:25px">
<div class="cb" style="left:5px;top:6px"></div>
<div class="c" style="left:34px;top:0px;width:39px">850</div>
<div class="c" style="left:84px;top:0px;width:59px">S0406</div>
<div class="c" style="left:154px;top:0px;width:99px">上海亚蔚测...</div>
<div class="c" style="left:264px;top:0px;width:109px">S0406-2W001...</div>
<div class="c" style="left:384px;top:0px;width:89px">¥2,980.00</div>
<div class="c" style="left:484px;top:0px;width:89px">银行转帐</div>
<div class="c" style="left:584px;top:0px;width:119px">11-08 18:08</div>
<div class="c" style="left:714px;top:0px;width:89px">中国交通银...</div>
<div class="c" style="left:814px;top:0px;width:69px">11-08</div>
</div>
<div class="row g" style="top:520px;height:25px">
<div class="cb" style="left:5px;top:6px"></div>
<div class="c" style="left:34px;top:0px;width:39px">849</div>
<div class="c" style="left:84px;top:0px;width:59px">S0406</div>
<div class="c" style="left:154px;top:0px;width:99px">上海亚蔚测...</div>
<div class="c" style="left:264px;top:0px;width:109px">S0406-2W001...</div>
<div class="c" style="left:384px;top:0px;width:89px">¥784.00</div>
<div class="c" style="left:484px;top:0px;width:89px">银行转帐</div>
<div class="c" style="left:584px;top:0px;width:119px">11-08 15:38</div>
<div class="c" style="left:714px;top:0px;width:89px">中国交通银...</div>
<div class="c" style="left:814px;top:0px;width:69px">11-08</div>
<div class="c" style="left:1034px;top:0px;width:109px">123</div>
</div>
<div class="row" style="top:545px;height:25px">
<div class="cb" style="left:5px;top:6px"></div>
<div class="c" style="left:34px;top:0px;width:39px">847</div>
<div class="c" style="left:84px;top:0px;width:59px">S0405</div>
<div class="c" style="left:154px;top:0px;width:99px">武杨专用</div>
<div class="c" style="left:264px;top:0px;width:109px">S0405-4Y00704</div>
<div class="c" style="left:384px;top:0px;width:89px">¥7.00</div>
<div class="c" style="left:484px;top:0px;width:89px">银行转帐</div>
<div class="c" style="left:584px;top:0px;width:119px">11-07 11:14</div>
<div class="c" style="left:714px;top:0px;width:89px">中国交通银...</div>
<div class="c" style="left:814px;top:0px;width:69px">11-07</div>
</div>
<div class="row g" style="top:570px;height:25px">
<div class="cb" style="left:5px;top:6px"></div>
<div class="c" style="left:34px;top:0px;width:39px">846</div>
<div class="c" style="left:84px;top:0px;width:59px">S0411</div>
<div class="c" style="left:154px;top:0px;width:99px">武杨财务专用2</div>
<div class="c" style="left:264px;top:0px;width:109px">S0411-1Y00600</div>
<div class="c" style="left:384px;top:0px;width:89px">¥9.00</div>
<div class="c" style="left:484px;top:0px;width:89px">银行转帐</div>
<div class="c" style="left:584px;top:0px;width:119px">11-07 11:13</div>
<div class="c" style="left:714px;top:0px;width:89px">支付宝001</div>
<div class="c" style="left:814px;top:0px;width:69px">11-07</div>
</div>
<div class="row" style="top:595px;height:25px">
<div class="cb" style="left:5px;top:6px"></div>
<div class="c" style="left:34px;top:0px;width:39px">842</div>
<div class="c" style="left:84px;top:0px;width:59px">S0411</div>
<div class="c" style="left:154px;top:0px;width:99px">武杨财务专用2</div>
<div class="c" style="left:384px;top:0px;width:89px">¥9.00</div>
<div class="c" style="left:484px;top:0px;width:89px">银行转帐</div>
<div class="c" style="left:584px;top:0px;width:119px">11-07 09:57</div>
<div class="c" style="left:714px;top:0px;width:89px">中国交通银...</div>
<div class="c" style="left:814px;top:0px;width:69px">11-07</div>
</div>
<div class="row g" style="top:620px;height:25px">
<div class="cb" style="left:5px;top:6px"></div>
<div class="c" style="left:34px;top:0px;width:39px">836</div>
<div class="c" style="left:84px;top:0px;width:59px">S0406</div>
<div class="c" style="left:154px;top:0px;width:99px">上海亚蔚测...</div>
<div class="c" style="left:264px;top:0px;width:109px">S0406-2Y00715</div>
<div class="c" style="left:384px;top:0px;width:89px">¥2,216.29</div>
<div class="c" style="left:484px;top:0px;width:89px">银行转帐</div>
<div class="c" style="left:584px;top:0px;width:119px">11-05 15:19</div>
<div class="c" style="left:714px;top:0px;width:89px">中国交通银...</div>
<div class="c" style="left:814px;top:0px;width:69px">11-05</div>
<div class="c" style="left:1034px;top:0px;width:109px">20181105</div>
</div>
<div class="row" style="top:645px;height:25px">
<div class="cb" style="left:5px;top:6px"></div>
<div class="c" style="left:34px;top:0px;width:39px">834</div>
<div class="c" style="left:84px;top:0px;width:59px">S0404</div>
<div class="c" style="left:154px;top:0px;width:99px">上海亚蔚测</div>
<div class="c" style="left:264px;top:0px;width:109px">S0404-2Y00713</div>
<div class="c" style="left:384px;top:0px;width:89px">¥1,342.59</div>
<div class="c" style="left:484px;top:0px;width:89px">快递代收</div>
<div class="c" style="left:584px;top:0px;width:119px">11-05 14:16</div>
<div class="c" style="left:714px;top:0px;width:89px">速通</div>
<div class="c" style="left:964px;top:0px;width:59px">是</div>
<div class="c" style="left:1034px;top:0px;width:109px">55555</div>
<div class="c" style="left:1154px;top:0px;width:141px">代收快递</div>
</div>
<div class="a frz"></div>
</body></html>
